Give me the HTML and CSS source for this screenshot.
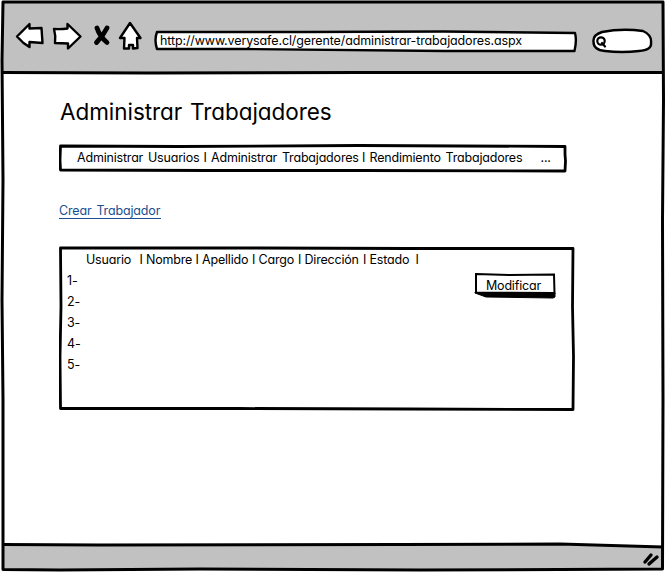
FILE: index.html
```
<!DOCTYPE html>
<html lang="es">
<head>
<meta charset="utf-8">
<title>Administrar Trabajadores</title>
<link rel="stylesheet" href="styles.css">
</head>
<body>
<div class="browser">
  <svg class="sketch frame" viewBox="0 0 665 572" aria-hidden="true">
    <path class="chrome" d="M3 2H662V73H3ZM3 545L560 544L662 547V569H3Z"/>
    <path class="line" d="M3 2L300 2L663 2L663.5 100L662.5 220L663 400L662.5 569L420 570L200 569L60 570L3 569.5L3 400L2 300L3 180L2 60Z"/>
    <path class="line" d="M3 72.500L150 73L360 72.500L662 72.500M3 544.500L100 545L400 544.500L560 544L663 547"/>
    <path class="grip" d="M645 562L651 555M649 564L657 557"/>
  </svg>
  <header class="toolbar">
    <svg class="tools" width="130" height="32" viewBox="0 0 130 32" aria-hidden="true">
      <path class="icon" d="M2 16.500L14.500 4V8.500L26.500 8L27.500 23L14.500 22V27L8.500 23Z"/>
      <path class="icon" d="M39 9Q46 9.500 52.500 8.500V4L65.500 16.500L53 28.500V23.500L40 23Q41 16 39 9Z"/>
      <path class="cross" d="M82 8Q84.500 16 92 22.500M92 8Q88 16 81.500 22.500"/>
      <path class="icon" d="M115 3L125.500 18H122L122.500 28L118 28.500V25H114V28.500H109L109.500 18H105Z"/>
    </svg>
    <div class="address">
      <svg class="sketch" viewBox="0 0 424 23" aria-hidden="true"><path class="field" d="M3 2L150 2L290 1.500L421 3Q423 10 420.500 21L290 21L90 19L3 19Q0 10 3 2Z"/></svg>
      <span class="text url">http://www.verysafe.cl/gerente/administrar-trabajadores.aspx</span>
    </div>
    <svg class="search" width="61" height="26" viewBox="0 0 61 26" aria-hidden="true">
      <path class="field" d="M10 4Q30 0 51 3Q60 7 59 15Q60 22 47 23Q30 25 13 23Q1 22 1.500 13Q1 7 10 4Z"/>
      <circle class="lens" cx="9" cy="13" r="3.700"/><path class="lens" d="M10 15L13 18.500"/>
    </svg>
  </header>
  <main class="content">
    <h1 class="text title">Administrar Trabajadores</h1>
    <nav class="menu">
      <svg class="sketch" viewBox="0 0 508 29" aria-hidden="true"><path class="box" d="M1.500 2L120 2.500L300 1.500L506 2.500L506 10L506.500 17L506 27L300 26.500L150 26.500L1.500 26L1 16Z"/></svg>
      <span class="text users">Administrar Usuarios</span><span class="text bar">I</span>
      <span class="text workers">Administrar Trabajadores</span><span class="text bar">I</span>
      <span class="text performance">Rendimiento Trabajadores</span><span class="text more">...</span>
    </nav>
    <a class="text create">Crear Trabajador</a>
    <section class="list">
      <svg class="sketch" viewBox="0 0 516 164" preserveAspectRatio="none" aria-hidden="true"><path class="box" d="M1.500 2L200 2L350 2.500L514 2.500L513.500 60L514.500 110L514 162.500L350 162L180 161.500L1.500 161.500L1 110L2 60Z"/></svg>
      <div class="heading">
        <span class="text usuario">Usuario</span><span class="text bar">I</span>
        <span class="text nombre">Nombre</span><span class="text bar">I</span>
        <span class="text apellido">Apellido</span><span class="text bar">I</span>
        <span class="text cargo">Cargo</span><span class="text bar">I</span>
        <span class="text direccion">Dirección</span><span class="text bar">I</span>
        <span class="text estado">Estado</span><span class="text bar">I</span>
      </div>
      <div class="body">
        <div class="rows">
          <div class="text">1-</div><div class="text">2-</div><div class="text">3-</div><div class="text">4-</div><div class="text">5-</div>
        </div>
        <button class="modify" type="button">
          <svg class="sketch" viewBox="0 0 82 28" aria-hidden="true"><path class="shadow" d="M1 20L81 21V25L79 26L12 25L1 21Z"/><path class="face" d="M2 2L35 3L80 2.500L80.500 21L2 20.500L2 13Z"/></svg>
          <span class="text">Modificar</span>
        </button>
      </div>
    </section>
  </main>
</div>
</body>
</html>
```
FILE: styles.css
```
* { box-sizing: border-box; }
body { margin: 0; background: #fff; color: #000; }
.browser { position: relative; width: 665px; height: 572px; overflow: hidden; }
.sketch { position: absolute; inset: 0; width: 100%; height: 100%; z-index: 0; }
.chrome { fill: #c1c1c1; }
.line { fill: none; stroke: #000; stroke-width: 3; stroke-linejoin: round; }
.grip { fill: none; stroke: #000; stroke-width: 3.4; stroke-linecap: round; }
.icon, .field { fill: #fff; stroke: #000; stroke-width: 2.4; stroke-linejoin: round; }
.cross { fill: none; stroke: #000; stroke-width: 4.8; stroke-linecap: round; }
.lens { fill: none; stroke: #000; stroke-width: 2.2; stroke-linecap: round; }
.box { fill: #fff; stroke: #000; stroke-width: 2.8; stroke-linejoin: round; }
.shadow { fill: #000; stroke: #000; stroke-width: 1; }
.face { fill: #fff; stroke: #000; stroke-width: 2; }
.text {
  position: relative;
  font-family: Inter, "Liberation Sans", sans-serif;
  font-feature-settings: "cv11", "calt" 0;
  font-size: 12.5px;
  letter-spacing: -0.19px;
  word-spacing: 1.5px;
  font-weight: 420;
  line-height: 18px;
  white-space: pre;
}
.toolbar { position: relative; display: flex; height: 74px; padding: 0 12px 0 15px; }
.tools { margin-top: 20px; flex: none; }
.address { position: relative; width: 424px; height: 23px; margin: 30px 0 0 9px; padding: 2px 0 0 6px; flex: none; }
.url { display: block; letter-spacing: -0.12px; }
.search { margin: 28px 0 0 14px; flex: none; }
.content { position: relative; padding: 24px 0 0 59px; }
.title { margin: 0 0 0 1px; font-size: 22.5px; line-height: 28px; letter-spacing: -0.05px; font-weight: 400; }
.menu { position: relative; display: flex; width: 508px; height: 29px; margin-top: 18px; padding: 5px 0 0 18px; }
.users { width: 126.5px; }
.workers { width: 151px; }
.performance { width: 171px; }
.bar { width: 7.5px; }
.create { display: block; width: 102px; height: 17px; margin-top: 29px; line-height: 17px; letter-spacing: -0.15px; color: #194f91; border-bottom: 1px solid #194f91; }
.list { position: relative; width: 516px; height: 165px; margin-top: 27px; padding: 5px 0 0 8px; }
.heading { display: flex; padding-left: 19px; }
.heading .bar { width: 6.5px; }
.usuario { width: 53.5px; }
.nombre { width: 49.5px; }
.apellido { width: 50px; }
.cargo { width: 39.5px; }
.direccion { width: 58.5px; }
.estado { width: 46px; }
.body { display: flex; justify-content: space-between; padding-right: 19px; }
.rows { display: grid; grid-auto-rows: 21px; padding-top: 3px; }
.modify { position: relative; display: flex; align-items: flex-start; width: 82px; height: 28px; margin-top: 3px; padding: 5px 0 0 12px; border: 0; background: none; }
```
